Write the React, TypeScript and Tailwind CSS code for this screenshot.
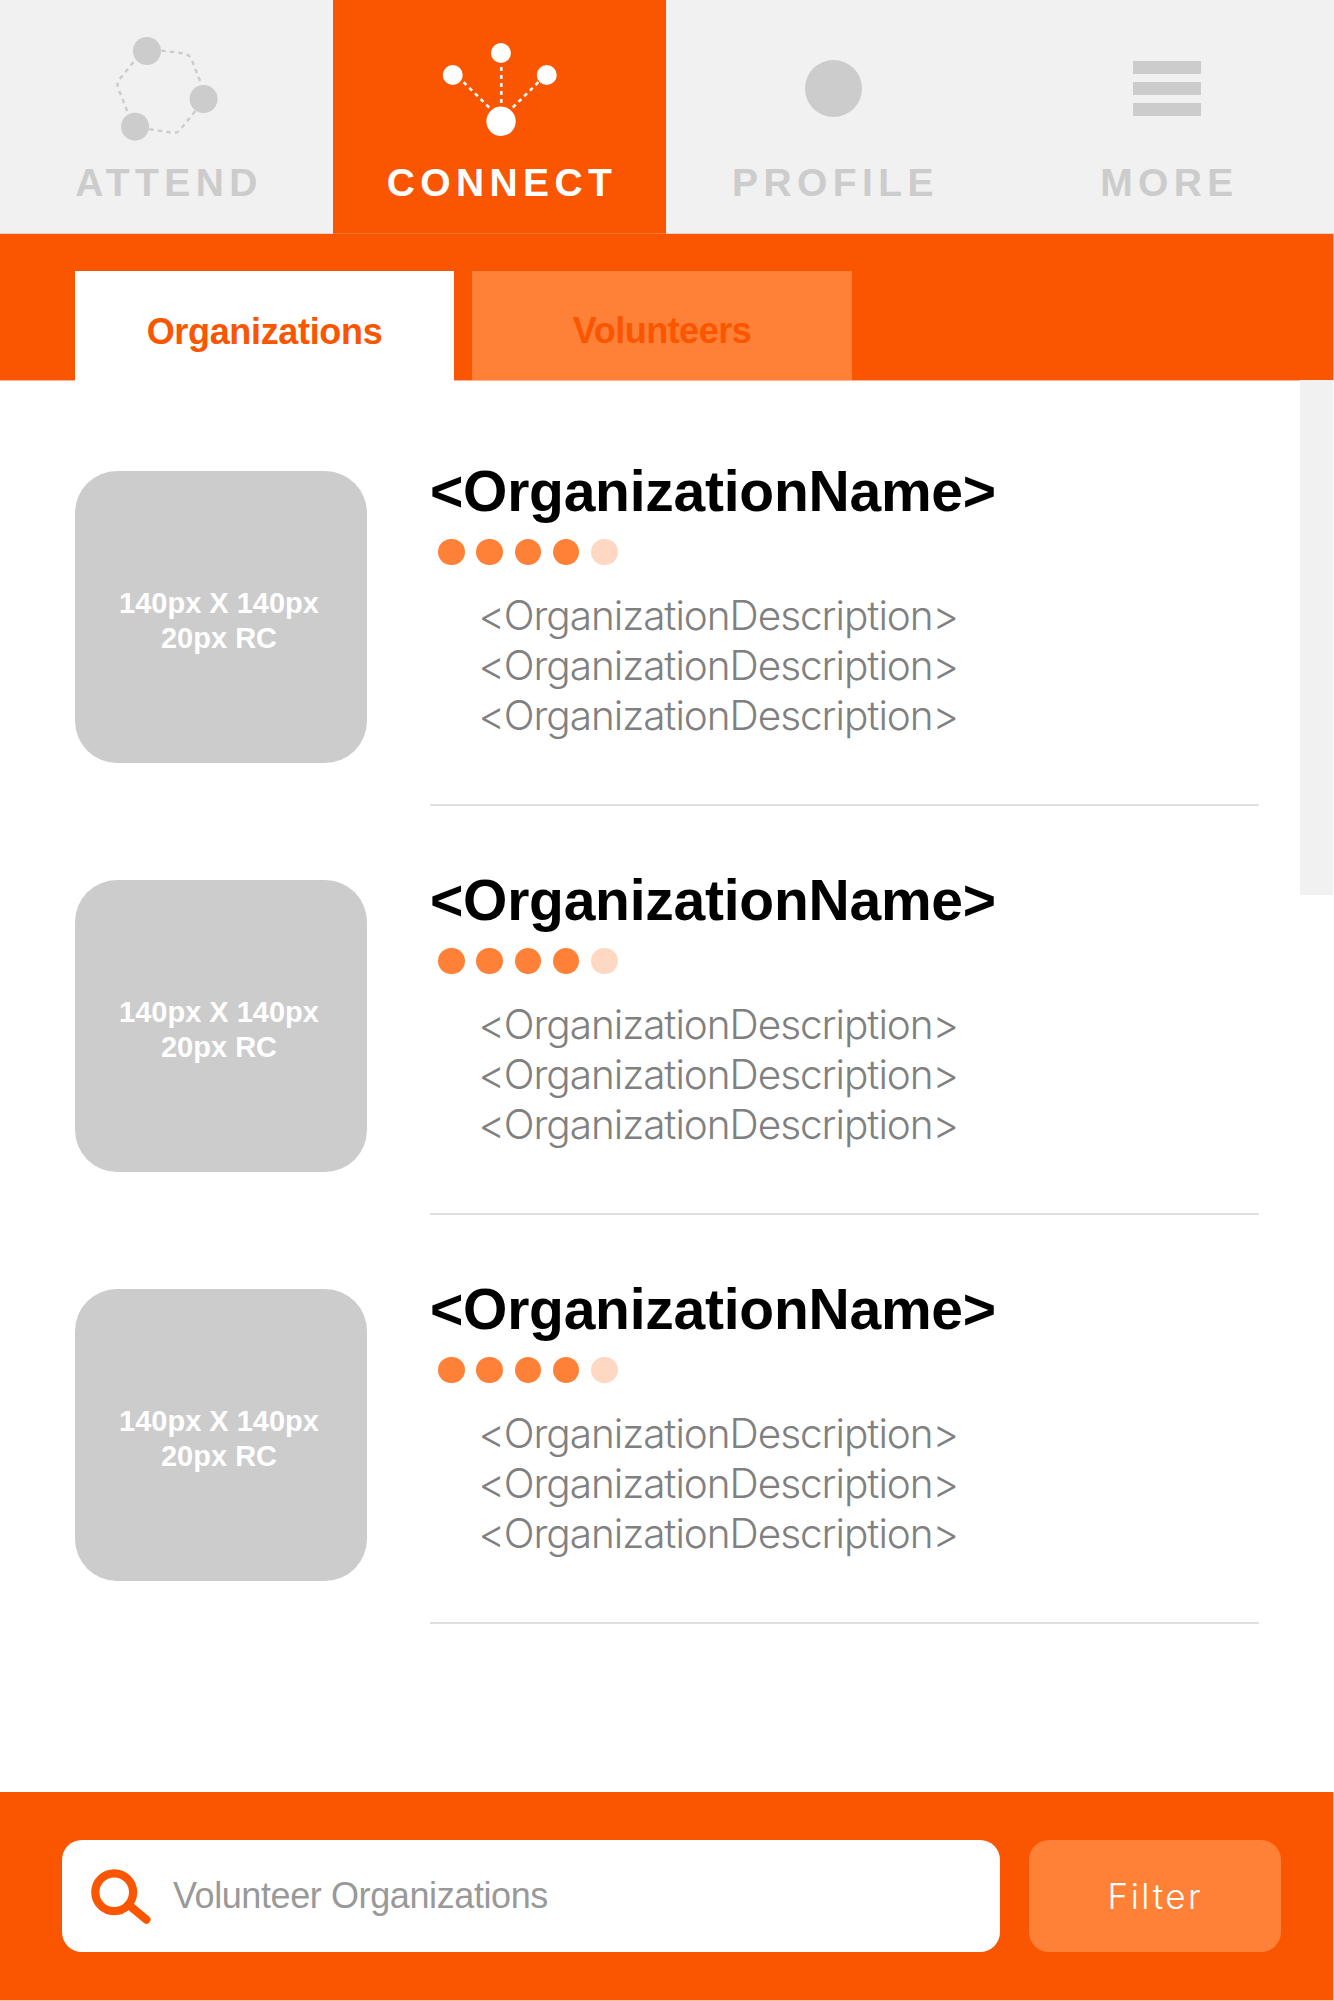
import type { ReactNode } from "react";

const organizations = [
  { id: 1, rating: 4 },
  { id: 2, rating: 4 },
  { id: 3, rating: 4 },
];

function AttendIcon() {
  return (
    <svg className="mt-8 h-[114px] w-[108px]" viewBox="112.75 32 108 114" fill="#cccccc">
      <g fill="none" stroke="#cccccc" strokeWidth="2.4" strokeDasharray="4.4 4.2">
        <path d="M161 50.6 L183 53.3 Q189 54.2 191.5 60 L201 84" />
        <path d="M195 111 L180.5 129 Q177.5 133.4 172 132.7 L149 129.2" />
        <path d="M127 111 L118 88.5 Q116 83 119.5 79 L134.5 60.5" />
      </g>
      <circle cx="146.7" cy="51" r="14" />
      <circle cx="203.3" cy="99" r="14" />
      <circle cx="134.8" cy="126.7" r="14" />
    </svg>
  );
}

function ConnectIcon() {
  return (
    <svg className="mt-9 h-[104px] w-[124px]" viewBox="438.25 36 124 104" fill="#ffffff">
      <g stroke="#ffffff" strokeWidth="2.6" strokeDasharray="4 4">
        <path d="M501.5 67 V106" />
        <path d="M463.8 82.2 L490.5 108.5" />
        <path d="M538.6 82.2 L512 108.5" />
      </g>
      <circle cx="453" cy="75" r="10" />
      <circle cx="501.2" cy="53" r="10" />
      <circle cx="547" cy="75" r="10" />
      <circle cx="501.3" cy="121.3" r="14.7" />
    </svg>
  );
}

function SearchIcon() {
  return (
    <svg className="h-[56px] w-[62px] shrink-0" viewBox="0 0 62 56" fill="none" stroke="#fa5500">
      <circle cx="24.2" cy="24.2" r="18.9" strokeWidth="8.2" />
      <path d="M40 38 L56.4 51.6" strokeWidth="8.2" strokeLinecap="round" />
    </svg>
  );
}

function NavItem({ label, active, children }: { label: string; active?: boolean; children: ReactNode }) {
  return (
    <a
      className={
        active
          ? "flex flex-col items-center border-b border-[#fb7333] bg-[#fa5500] text-white"
          : "flex flex-col items-center border-b border-[#e6cfc6] bg-[#f1f1f1] text-[#cccccc]"
      }
    >
      <div className="flex h-[162.5px] flex-col items-center">{children}</div>
      <span className="pl-[5px] text-[39px] leading-10 font-bold tracking-[5.4px]">{label}</span>
    </a>
  );
}

function OrganizationRow({ rating }: { rating: number }) {
  return (
    <article className="flex h-[409px] gap-[63px]">
      <div className="mt-[9.5px] flex size-[292px] shrink-0 flex-col items-center justify-center rounded-[42px] bg-[#cccccc] pt-2 pr-[4px] text-center text-[29px] leading-[35px] font-bold text-white">
        <span>140px X 140px</span>
        <span>20px RC</span>
      </div>
      <div className="w-[829px]">
        <h2 className="text-[57px] leading-[60px] font-bold tracking-[-0.24px] text-black">{"<OrganizationName>"}</h2>
        <div className="mt-[17.7px] ml-2 flex gap-[11.7px]">
          {[1, 2, 3, 4, 5].map((n) => (
            <span key={n} className={n <= rating ? "size-[26.6px] rounded-full bg-[#ff8138]" : "size-[26.6px] rounded-full bg-[#ffd8c4]"} />
          ))}
        </div>
        <div className="mt-[25.7px] ml-[48.4px] font-['Inter',sans-serif] text-[40.5px] leading-[50px] font-[265] tracking-[-1.03px] text-[#808080]">
          <p>{"<OrganizationDescription>"}</p>
          <p>{"<OrganizationDescription>"}</p>
          <p>{"<OrganizationDescription>"}</p>
        </div>
        <div className="mt-[63px] h-0.5 bg-[#e0e0e0]" />
      </div>
    </article>
  );
}

export default function App() {
  return (
    <div className="flex h-[2001px] w-[1334px] flex-col overflow-hidden bg-white font-['Liberation_Sans',Arial,sans-serif]">
      <nav className="grid h-[234px] shrink-0 grid-cols-[333px_333px_334px_334px]">
        <NavItem label="ATTEND">
          <AttendIcon />
        </NavItem>
        <NavItem label="CONNECT" active>
          <ConnectIcon />
        </NavItem>
        <NavItem label="PROFILE">
          <span className="mt-[59.5px] size-[57px] rounded-full bg-[#cccccc]" />
        </NavItem>
        <NavItem label="MORE">
          <span className="mt-[61px] mr-px flex w-[68px] flex-col gap-2">
            <span className="h-[13px] bg-[#cccccc]" />
            <span className="h-[13px] bg-[#cccccc]" />
            <span className="h-[13px] bg-[#cccccc]" />
          </span>
        </NavItem>
      </nav>

      <div className="flex h-[147px] shrink-0 items-end gap-[18px] border-r border-b border-[#fdb292] bg-[#fa5500] pl-[75px] text-[36px] leading-10 font-bold text-[#fa5500]">
        <button className="-mb-px flex h-[110px] w-[379px] justify-center bg-white pt-[41px] tracking-[-0.33px]">Organizations</button>
        <button className="flex h-[109px] w-[380px] justify-center bg-[#ff8138] pt-10 tracking-[-0.5px]">Volunteers</button>
      </div>

      <main className="flex min-h-0 flex-1 items-start justify-between">
        <section className="pt-20 pl-[75px]">
          {organizations.map((o) => (
            <OrganizationRow key={o.id} rating={o.rating} />
          ))}
        </section>
        <div className="-mt-px mr-px h-[514.5px] w-[33px] bg-[#f1f1f1]" />
      </main>

      <footer className="flex h-[209px] shrink-0 items-start gap-[29px] border-r border-b border-[#fdc3a5] bg-[#fa5500] pt-12 pl-[62.4px]">
        <label className="flex h-[112px] w-[937.5px] items-center rounded-[20px] bg-white pl-7">
          <SearchIcon />
          <span className="pl-[20.5px] text-[36px] leading-10 tracking-[-0.4px] text-[#999999]">Volunteer Organizations</span>
        </label>
        <button className="h-[112px] w-[252px] rounded-[20px] bg-[#ff8138] pl-[1px] font-['Inter',sans-serif] text-[35px] leading-10 font-[290] tracking-[2.5px] text-white">
          Filter
        </button>
      </footer>
    </div>
  );
}
